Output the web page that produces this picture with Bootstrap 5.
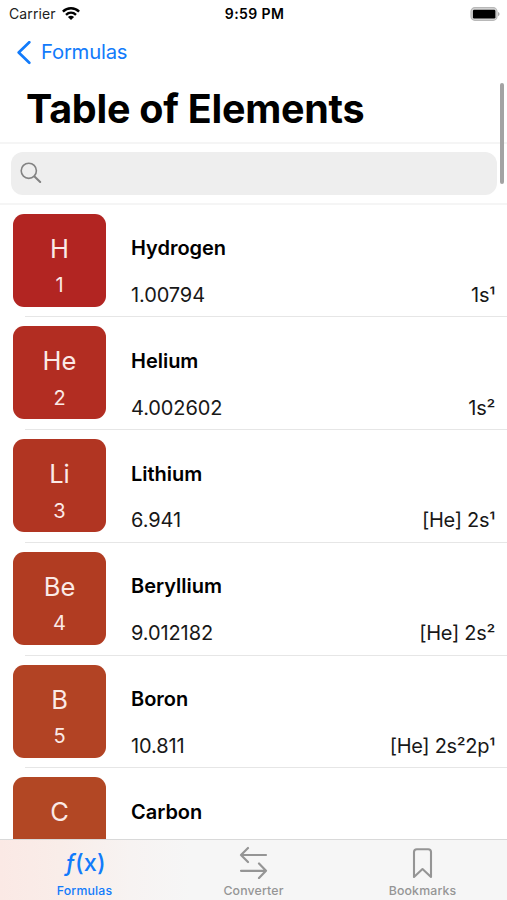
<!DOCTYPE html>
<html lang="en">
<head>
<meta charset="utf-8">
<meta name="viewport" content="width=device-width, initial-scale=1">
<title>Table of Elements</title>
<link href="https://cdn.jsdelivr.net/npm/bootstrap@5.3.0/dist/css/bootstrap.min.css" rel="stylesheet">
<style>
  body { font-family: Inter, "Liberation Sans", sans-serif; color: #000; background: #fff; height: 900px; overflow: hidden; line-height: 1; }
  .screen { height: 900px; }
  .status { height: 28px; padding: 0 7px 0 9px; font-size: 14px; }
  .status > * { flex: 1 1 0; }
  .carrier { letter-spacing: .1px; color: #222; }
  .clock { font-weight: 600; font-size: 14px; letter-spacing: .4px; }
  .back { height: 48px; padding: 1px 0 0 16px; color: #127bfb; font-size: 20.3px; letter-spacing: -.22px; }
  .big-title { height: 66px; padding: 0 0 0 26px; font-size: 39.5px; font-weight: 700; letter-spacing: -.27px; line-height: 67px; margin: 0; }
  .search-wrap { height: 62.5px; padding: 8px 10px 8px 11px; border-top: 2px solid #f5f5f5; border-bottom: 2px solid #f5f5f5; }
  .search-field { background: #eee; border-radius: 12px; padding-left: 9px; }
  .element { height: 112.8px; padding: 9px 12px 0 13px; }
  .tile { width: 93px; height: 93px; border-radius: 11px; color: #fbeae7; }
  .sym { font-size: 25.5px; line-height: 30px; margin-top: 20px; }
  .num { font-size: 20px; line-height: 24px; margin-top: 9.5px; }
  .info { margin-left: 25px; font-size: 20px; letter-spacing: -.1px; }
  .el-name { font-weight: 600; line-height: 24px; margin-top: 22.5px; letter-spacing: -.02px; }
  .el-data { line-height: 24px; margin-top: 22.8px; color: #181818; }
  .el-conf { letter-spacing: -.3px; }
  .power { vertical-align: -1px; line-height: 0; }
  .divider { height: 1px; background: #e6e6e6; margin: -1px 0 0 25px; }
  .tabs { height: 61px; border-top: 1px solid #d9d9d9; background: linear-gradient(90deg, #fbe9e5 0, #f9ede9 60px, #f7f3f2 130px, #f6f6f6 190px); color: #959595; font-size: 12.3px; font-weight: 500; }
  .tabs svg { display: block; }
  .tab-label { margin-top: 4px; letter-spacing: .17px; line-height: 15px; }
  .tab-on { color: #127bfb; }
  .fx { height: 39px; line-height: 45px; font-size: 23.5px; letter-spacing: .1px; padding-left: 2px; }
  .thumb { width: 4px; height: 101px; border-radius: 2px; background: #a3a3a3; right: 3px; top: 83px; }
</style>
<script src="https://cdn.jsdelivr.net/npm/bootstrap@5.3.0/dist/js/bootstrap.bundle.min.js"></script>
</head>
<body>
<div class="screen d-flex flex-column position-relative">
  <header class="flex-shrink-0">
    <div class="status d-flex align-items-center">
      <div class="carrier d-flex align-items-center">Carrier
        <svg style="margin-left:6px" width="18" height="14" viewBox="0 0 18 14"><g fill="none" stroke="#000" stroke-width="2.4"><path d="M.9 4.600C5.400.1 12.600.1 17.100 4.600"/><path d="M4 7.800C6.900 5.100 11.100 5.100 14 7.800"/></g><path d="M5.900 9.900Q9 7.400 12.100 9.900L9 13Z"/></svg>
      </div>
      <div class="clock text-center">9:59 PM</div>
      <div class="d-flex justify-content-end">
        <svg width="30" height="15" viewBox="0 0 30 15"><rect x="1" y=".7" width="26" height="12.600" rx="3.800" fill="#d8d8d8" stroke="#b8b8b8" stroke-width="1.200"/><rect x="2.900" y="2.700" width="22.500" height="8.800" rx="1.300"/><path d="M28 5.100Q29.600 5.800 29.600 7.100T28 9.300Z" fill="#aaa"/></svg>
      </div>
    </div>
    <div class="back d-flex align-items-center">
      <svg class="me-2" width="17" height="24" viewBox="0 0 17 24"><path d="M13.300 1.200 2.700 11.500l10.600 10.300" fill="none" stroke="currentColor" stroke-width="2.700" stroke-linecap="round" stroke-linejoin="round"/></svg>
      <span>Formulas</span>
    </div>
    <h1 class="big-title">Table of Elements</h1>
    <div class="search-wrap">
      <div class="search-field h-100 d-flex align-items-center">
        <svg width="22" height="22" viewBox="0 0 22 22" fill="none" stroke="#838383" stroke-linecap="round"><circle cx="8.800" cy="8.800" r="7.600" stroke-width="1.600"/><path d="m14.500 14.500 5.700 5.500" stroke-width="2.100"/></svg>
      </div>
    </div>
  </header>

  <main class="flex-grow-1 overflow-hidden" id="elements"></main>

  <nav class="tabs flex-shrink-0 row g-0 text-center">
    <div class="col tab-on"><div class="fx"><i>ƒ</i>(x)</div><div class="tab-label">Formulas</div></div>
    <div class="col">
      <svg class="mx-auto" width="30" height="39" viewBox="0 0 30 39" fill="none" stroke="currentColor" stroke-width="2.200" stroke-linecap="round" stroke-linejoin="round"><path d="M27 15H2M9 8 2 15l7 7M2 30.800h25M20 23.500l7 7.300-7 7.300"/></svg>
      <div class="tab-label">Converter</div>
    </div>
    <div class="col">
      <svg class="mx-auto" width="30" height="39" viewBox="0 0 30 39" fill="none" stroke="currentColor" stroke-width="2.100" stroke-linejoin="round"><path d="M6 37V12q0-2.800 2.800-2.800h11.400q2.800 0 2.800 2.800v25l-8.500-8Z"/></svg>
      <div class="tab-label">Bookmarks</div>
    </div>
  </nav>
  <div class="thumb position-absolute"></div>
</div>
<script>
  const elements = [
    ['H', 'Hydrogen', '#b22522', 1, '1.00794', '1s¹'],
    ['He', 'Helium', '#b22d22', 2, '4.002602', '1s²'],
    ['Li', 'Lithium', '#b13522', 3, '6.941', '[He] 2s¹'],
    ['Be', 'Beryllium', '#b13c22', 4, '9.012182', '[He] 2s²'],
    ['B', 'Boron', '#b24324', 5, '10.811', '[He] 2s²2p¹'],
    ['C', 'Carbon', '#b24724', '', '', '']
  ];
  const powers = text => text.replace(/[¹²]/g, '<span class="power">$&</span>');
  document.getElementById('elements').innerHTML = elements.map(([sym, name, color, num, mass, conf]) => `
    <article>
      <div class="element d-flex">
        <div class="tile flex-shrink-0 text-center" style="background:${color}">
          <div class="sym">${sym}</div><div class="num">${num}</div>
        </div>
        <div class="info flex-grow-1">
          <div class="el-name">${name}</div>
          <div class="el-data d-flex justify-content-between"><span>${mass}</span><span class="el-conf">${powers(conf)}</span></div>
        </div>
      </div>
      <div class="divider"></div>
    </article>`).join('');
</script>
</body>
</html>
